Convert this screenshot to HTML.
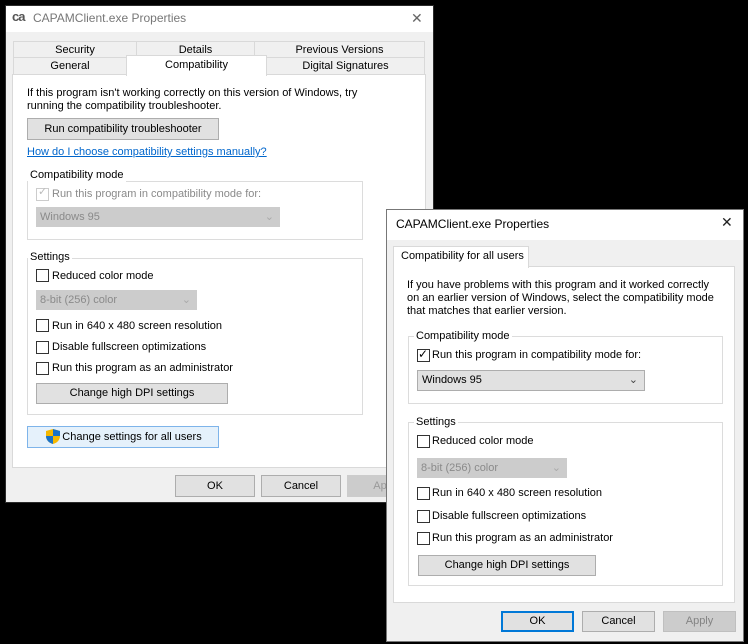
<!DOCTYPE html>
<html><head><meta charset="utf-8"><style>
*{box-sizing:border-box;margin:0;padding:0}
body{width:748px;height:644px;background:#000;position:relative;overflow:hidden;font-family:"Liberation Sans",sans-serif;font-size:11px;color:#000}
.a{position:absolute}
.t{position:absolute;white-space:nowrap;line-height:13px}
.btn{position:absolute;background:#e1e1e1;border:1px solid #adadad;text-align:center;white-space:nowrap}
.cb{position:absolute;width:13px;height:13px;border:1px solid #333;background:#fff}
.grp{position:absolute;border:1px solid #dcdcdc}
.gl{position:absolute;background:#fff;padding:0 2px;white-space:nowrap;line-height:13px}
.sel{position:absolute;background:#ccc;color:#8a8a8a;padding-left:4px;white-space:nowrap}
.tab{position:absolute;background:#f0f0f0;border:1px solid #d9d9d9;text-align:center;line-height:17px}
.w2{font-size:11px}
</style></head><body>
<!-- window 1 -->
<div class="a" style="left:5px;top:5px;width:429px;height:498px;background:#f0f0f0;border:1px solid #2b2b2b"></div>
<div class="a" style="left:6px;top:6px;width:427px;height:26px;background:#fff"></div>
<div class="t" style="left:12px;top:10px;font-weight:bold;font-size:13px;color:#555;letter-spacing:-1px">ca</div>
<div class="t" style="left:33px;top:12px;font-size:12px;color:#777">CAPAMClient.exe Properties</div>
<div class="t" style="left:411px;top:12px;font-size:14px;color:#666">✕</div>

<div class="tab" style="left:13px;top:41px;width:124px;height:17px">Security</div>
<div class="tab" style="left:136px;top:41px;width:119px;height:17px">Details</div>
<div class="tab" style="left:254px;top:41px;width:171px;height:17px">Previous Versions</div>
<div class="tab" style="left:13px;top:57px;width:114px;height:18px">General</div>
<div class="tab" style="left:266px;top:57px;width:159px;height:18px">Digital Signatures</div>
<div class="a" style="left:12px;top:74px;width:414px;height:394px;background:#fff;border:1px solid #d9d9d9"></div>
<div class="tab" style="left:126px;top:55px;width:141px;height:21px;background:#fff;border-bottom:none;line-height:18px">Compatibility</div>

<div class="t" style="left:27px;top:87px">If this program isn't working correctly on this version of Windows, try</div>
<div class="t" style="left:27px;top:100px">running the compatibility troubleshooter.</div>
<div class="btn" style="left:27px;top:118px;width:192px;height:22px;line-height:20px">Run compatibility troubleshooter</div>
<div class="t" style="left:27px;top:146px;color:#0066cc;text-decoration:underline">How do I choose compatibility settings manually?</div>

<div class="grp" style="left:27px;top:181px;width:336px;height:59px"></div>
<div class="gl" style="left:28px;top:169px">Compatibility mode</div>
<div class="cb" style="left:36px;top:188px;border-color:#ccc"></div>
<div class="t" style="left:38px;top:186px;color:#bbb;font-size:11px">✓</div>
<div class="t" style="left:52px;top:188px;color:#8a8a8a">Run this program in compatibility mode for:</div>
<div class="sel" style="left:36px;top:207px;width:244px;height:20px;line-height:20px">Windows 95<span style="position:absolute;right:6px;color:#aaa">⌄</span></div>

<div class="grp" style="left:27px;top:258px;width:336px;height:157px"></div>
<div class="gl" style="left:28px;top:251px">Settings</div>
<div class="cb" style="left:36px;top:269px"></div><div class="t" style="left:52px;top:270px">Reduced color mode</div>
<div class="sel" style="left:36px;top:290px;width:161px;height:20px;line-height:20px">8-bit (256) color<span style="position:absolute;right:6px;color:#aaa">⌄</span></div>
<div class="cb" style="left:36px;top:319px"></div><div class="t" style="left:52px;top:320px">Run in 640 x 480 screen resolution</div>
<div class="cb" style="left:36px;top:341px"></div><div class="t" style="left:52px;top:341px">Disable fullscreen optimizations</div>
<div class="cb" style="left:36px;top:362px"></div><div class="t" style="left:52px;top:362px">Run this program as an administrator</div>
<div class="btn" style="left:36px;top:383px;width:192px;height:21px;line-height:19px">Change high DPI settings</div>

<div class="btn" style="left:27px;top:426px;width:192px;height:22px;line-height:20px;background:#e5f1fb;border-color:#7eb4ea;padding-left:18px">Change settings for all users</div>
<svg class="a" style="left:45px;top:428px" width="16" height="17" viewBox="0 0 16 17"><path d="M8 1 L15 3 V8 C15 12 12 15 8 16 C4 15 1 12 1 8 V3 Z" fill="#f5b800"/><path d="M8 1 L15 3 V8 H8 Z M1 8 H8 V16 C4 15 1 12 1 8Z" fill="#1a73c8"/></svg>

<div class="btn" style="left:175px;top:475px;width:80px;height:22px;line-height:20px">OK</div>
<div class="btn" style="left:261px;top:475px;width:80px;height:22px;line-height:20px">Cancel</div>
<div class="btn" style="left:347px;top:475px;width:80px;height:22px;line-height:20px;color:#999;border-color:#ccc;background:#ccc">Apply</div>

<!-- window 2 -->
<div class="w2">
<div class="a" style="left:386px;top:209px;width:358px;height:433px;background:#f0f0f0;border:1px solid #777"></div>
<div class="a" style="left:387px;top:210px;width:356px;height:30px;background:#fff"></div>
<div class="t" style="left:396px;top:218px;font-size:12px">CAPAMClient.exe Properties</div>
<div class="t" style="left:721px;top:216px;font-size:14px;color:#222">✕</div>
<div class="a" style="left:393px;top:266px;width:342px;height:337px;background:#fff;border:1px solid #d9d9d9"></div>
<div class="a" style="left:393px;top:246px;width:136px;height:22px;background:#fff;border:1px solid #d9d9d9;border-bottom:none"></div>
<div class="t" style="left:401px;top:250px">Compatibility for all users</div>
<div class="t" style="left:407px;top:279px;line-height:13px">If you have problems with this program and it worked correctly<br>on an earlier version of Windows, select the compatibility mode<br>that matches that earlier version.</div>

<div class="grp" style="left:408px;top:336px;width:315px;height:68px"></div>
<div class="gl" style="left:414px;top:330px">Compatibility mode</div>
<div class="cb" style="left:417px;top:349px"></div>
<div class="t" style="left:418px;top:348px;font-size:12px">✓</div>
<div class="t" style="left:432px;top:349px">Run this program in compatibility mode for:</div>
<div class="sel" style="left:417px;top:370px;width:228px;height:21px;line-height:19px;background:#e1e1e1;border:1px solid #adadad;color:#000">Windows 95<span style="position:absolute;right:6px;color:#444">⌄</span></div>

<div class="grp" style="left:408px;top:422px;width:315px;height:164px"></div>
<div class="gl" style="left:414px;top:416px">Settings</div>
<div class="cb" style="left:417px;top:435px"></div><div class="t" style="left:432px;top:435px">Reduced color mode</div>
<div class="sel" style="left:417px;top:458px;width:150px;height:20px;line-height:20px">8-bit (256) color<span style="position:absolute;right:6px;color:#aaa">⌄</span></div>
<div class="cb" style="left:417px;top:487px"></div><div class="t" style="left:432px;top:487px">Run in 640 x 480 screen resolution</div>
<div class="cb" style="left:417px;top:510px"></div><div class="t" style="left:432px;top:510px">Disable fullscreen optimizations</div>
<div class="cb" style="left:417px;top:532px"></div><div class="t" style="left:432px;top:532px">Run this program as an administrator</div>
<div class="btn" style="left:418px;top:555px;width:178px;height:21px;line-height:19px">Change high DPI settings</div>

<div class="btn" style="left:501px;top:611px;width:73px;height:21px;line-height:17px;border:2px solid #0078d7">OK</div>
<div class="btn" style="left:582px;top:611px;width:73px;height:21px;line-height:19px">Cancel</div>
<div class="btn" style="left:663px;top:611px;width:73px;height:21px;line-height:19px;background:#ccc;border-color:#bfbfbf;color:#838383">Apply</div>
</div>
</body></html>
